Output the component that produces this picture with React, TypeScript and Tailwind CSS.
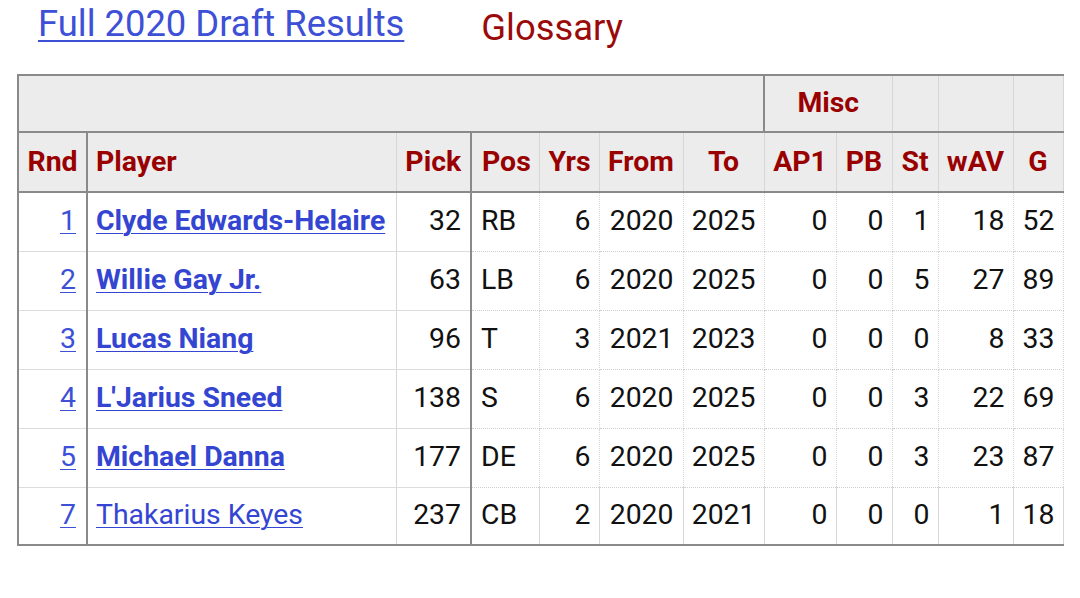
const players = [
  { rnd: 1, name: "Clyde Edwards-Helaire", bold: true, pick: 32, pos: "RB", yrs: 6, from: 2020, to: 2025, ap1: 0, pb: 0, st: 1, wav: 18, g: 52 },
  { rnd: 2, name: "Willie Gay Jr.", bold: true, pick: 63, pos: "LB", yrs: 6, from: 2020, to: 2025, ap1: 0, pb: 0, st: 5, wav: 27, g: 89 },
  { rnd: 3, name: "Lucas Niang", bold: true, pick: 96, pos: "T", yrs: 3, from: 2021, to: 2023, ap1: 0, pb: 0, st: 0, wav: 8, g: 33 },
  { rnd: 4, name: "L'Jarius Sneed", bold: true, pick: 138, pos: "S", yrs: 6, from: 2020, to: 2025, ap1: 0, pb: 0, st: 3, wav: 22, g: 69 },
  { rnd: 5, name: "Michael Danna", bold: true, pick: 177, pos: "DE", yrs: 6, from: 2020, to: 2025, ap1: 0, pb: 0, st: 3, wav: 23, g: 87 },
  { rnd: 7, name: "Thakarius Keyes", bold: false, pick: 237, pos: "CB", yrs: 2, from: 2020, to: 2021, ap1: 0, pb: 0, st: 0, wav: 1, g: 18 },
];

const widths = [69, 309, 75, 68, 60, 84, 81, 72, 56, 46, 75, 50];

export default function App() {
  return (
    <div className="h-[598px] w-[1080px] overflow-hidden bg-white font-['Roboto','Liberation_Sans',sans-serif]">
      <div className="flex h-[74px] items-start pl-[38px]">
        <a href="#" className="mt-[4px] text-[36.4px] leading-[40px] text-[#3d50d6] underline decoration-[1.5px] underline-offset-[4px]">
          Full 2020 Draft Results
        </a>
        <span className="ml-[77px] mt-[8px] text-[36.4px] leading-[40px] text-[#9b0a0a]">Glossary</span>
      </div>

      <table className="ml-[17px] table-fixed border-collapse border-t-2 border-l-2 border-b-2 border-[#8a8a8a] text-[28.4px]">
        <colgroup>
          {widths.map((w, i) => (
            <col key={i} style={{ width: w }} />
          ))}
        </colgroup>
        <thead className="bg-[#ececec] font-bold text-[#990000]">
          <tr className="h-[57px]">
            <th colSpan={7} className="border-b-2 border-[#8a8a8a]"></th>
            <th colSpan={2} className="border-b-2 border-l-2 border-[#8a8a8a] text-center">Misc</th>
            <th className="border-b-2 border-l border-[#8a8a8a] border-l-[#d6d6d6]"></th>
            <th className="border-b-2 border-l border-[#8a8a8a] border-l-[#d6d6d6]"></th>
            <th className="border-b-2 border-l border-r border-[#8a8a8a] border-l-[#d6d6d6] border-r-[#d6d6d6]"></th>
          </tr>
          <tr className="h-[60px]">
            <th className="border-b-2 border-r-2 border-[#8a8a8a] text-center">Rnd</th>
            <th className="border-b-2 border-r border-[#8a8a8a] border-r-[#d6d6d6] pl-[8px] text-left">Player</th>
            <th className="border-b-2 border-r-2 border-[#8a8a8a] text-center">Pick</th>
            <th className="border-b-2 border-r border-[#8a8a8a] border-r-[#d6d6d6] pl-[10px] text-left">Pos</th>
            <th className="border-b-2 border-r border-[#8a8a8a] border-r-[#d6d6d6] pr-[8px] text-right">Yrs</th>
            <th className="border-b-2 border-r border-[#8a8a8a] border-r-[#d6d6d6] text-center">From</th>
            <th className="border-b-2 border-r border-[#8a8a8a] border-r-[#d6d6d6] text-center">To</th>
            <th className="border-b-2 border-r border-[#8a8a8a] border-r-[#d6d6d6] text-center">AP1</th>
            <th className="border-b-2 border-r border-[#8a8a8a] border-r-[#d6d6d6] text-center">PB</th>
            <th className="border-b-2 border-r border-[#8a8a8a] border-r-[#d6d6d6] text-center">St</th>
            <th className="border-b-2 border-r border-[#8a8a8a] border-r-[#d6d6d6] text-center">wAV</th>
            <th className="border-b-2 border-r border-[#8a8a8a] border-r-[#d6d6d6] text-center">G</th>
          </tr>
        </thead>
        <tbody className="text-[#111]">
          {players.map((p, i) => {
            const last = i === players.length - 1;
            const solid = last ? "" : "border-b border-b-[#dcdcdc]";
            const dotted = last ? "" : "border-b border-dotted border-b-[#cfcfcf]";
            const cell = `border-r border-r-[#d6d6d6] ${dotted} text-right pr-[8px]`;
            return (
              <tr key={p.rnd} className={last ? "h-[58px]" : "h-[59px]"}>
                <td className={`border-r-2 border-r-[#8a8a8a] ${solid} pr-[10px] text-right`}>
                  <a href="#" className="text-[#3d50d6] underline decoration-1 underline-offset-[3px]">{p.rnd}</a>
                </td>
                <td className={`border-r border-r-[#d6d6d6] ${solid} pl-[8px] text-left whitespace-nowrap`}>
                  <a
                    href="#"
                    className={`text-[#3445d2] underline decoration-1 underline-offset-[3px] ${p.bold ? "font-bold" : ""}`}
                  >
                    {p.name}
                  </a>
                </td>
                <td className={`border-r-2 border-r-[#8a8a8a] ${solid} pr-[9px] text-right`}>{p.pick}</td>
                <td className={`border-r border-r-[#d6d6d6] ${dotted} pl-[9px] text-left`}>{p.pos}</td>
                <td className={cell}>{p.yrs}</td>
                <td className={`${cell} !pr-[9px]`}>{p.from}</td>
                <td className={cell}>{p.to}</td>
                <td className={cell}>{p.ap1}</td>
                <td className={cell}>{p.pb}</td>
                <td className={cell}>{p.st}</td>
                <td className={cell}>{p.wav}</td>
                <td className={cell}>{p.g}</td>
              </tr>
            );
          })}
        </tbody>
      </table>
    </div>
  );
}
